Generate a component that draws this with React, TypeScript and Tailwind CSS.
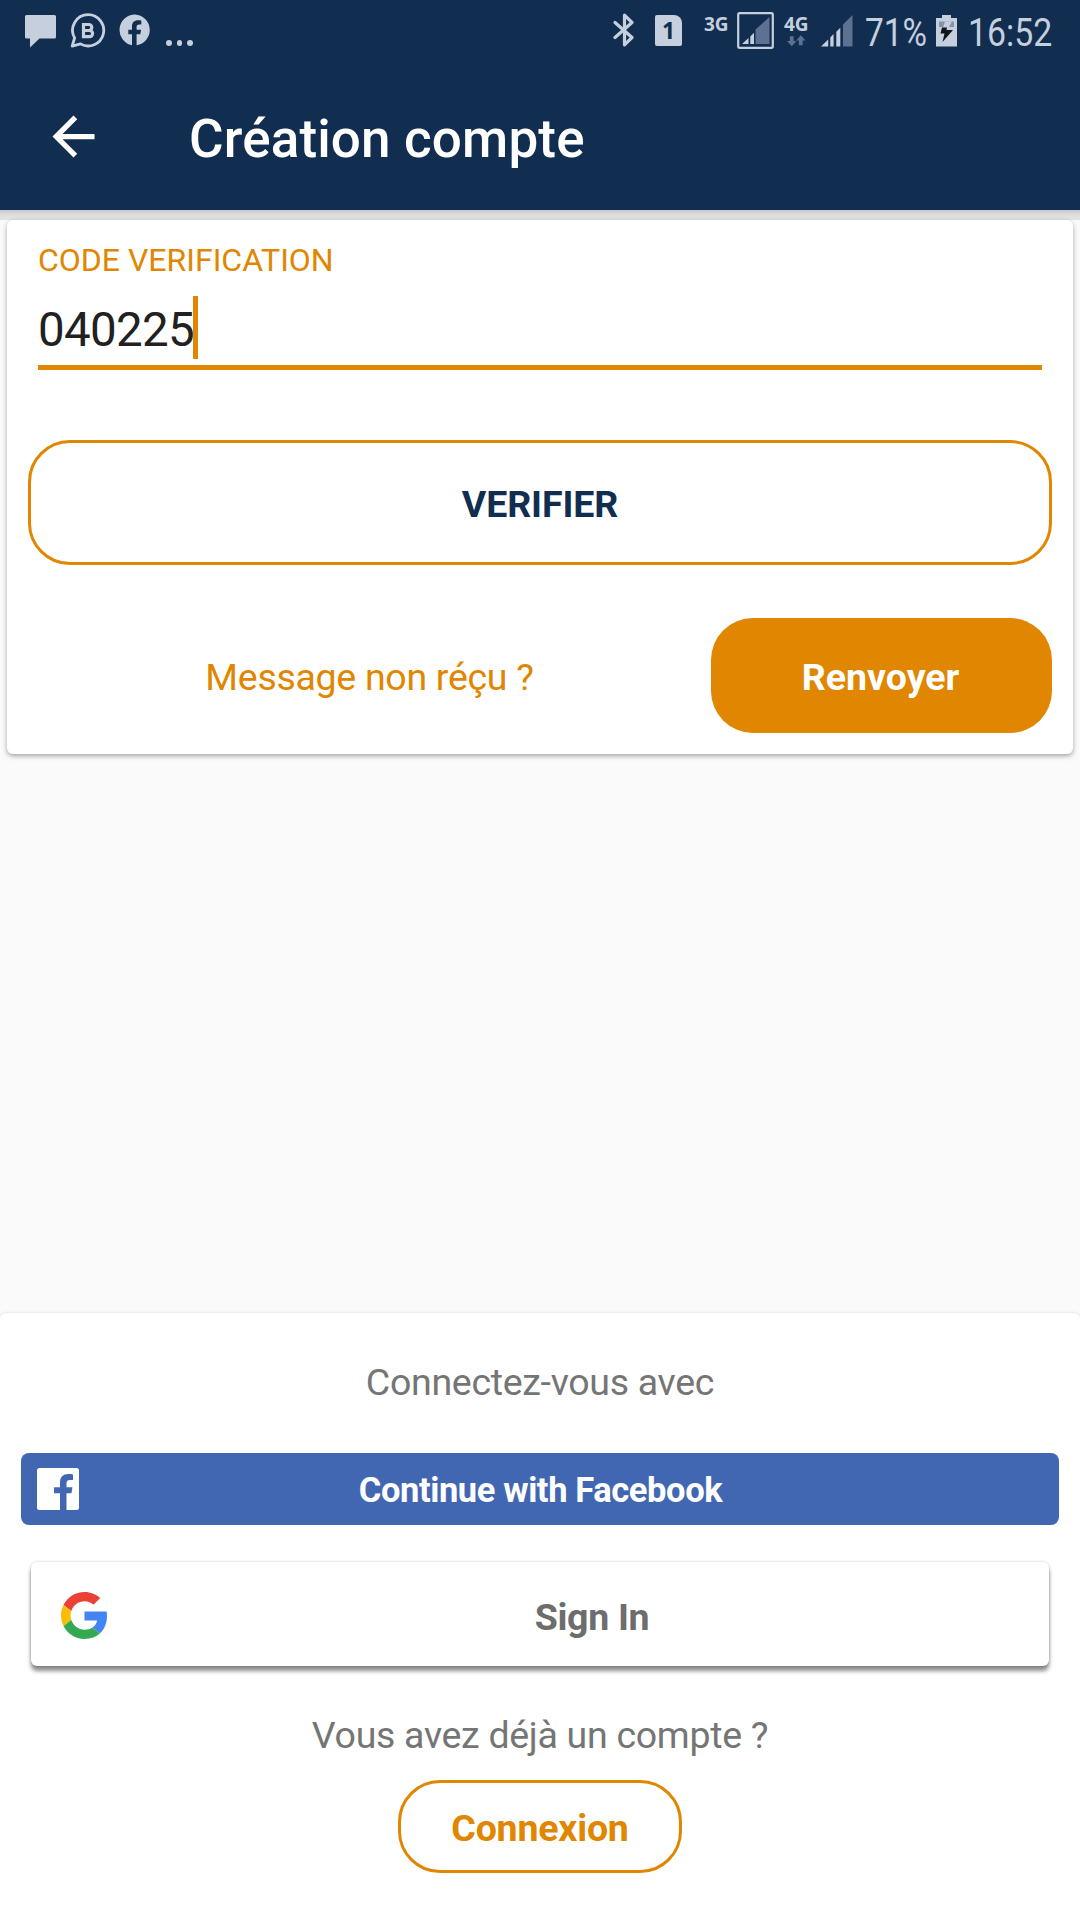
import React from "react";

type IconProps = {
  className?: string;
};

const ChatIcon: React.FC<IconProps> = ({ className }) => (
  <svg viewBox="0 0 31 33" className={className} fill="currentColor">
    <path d="M1.500 0h28A1.500 1.500 0 0 1 31 1.500V22a1.500 1.500 0 0 1-1.500 1.500H14.500L5 32.500V23.500H1.500A1.500 1.500 0 0 1 0 22V1.500A1.500 1.500 0 0 1 1.500 0Z" />
  </svg>
);

const BusinessChatIcon: React.FC<IconProps> = ({ className }) => (
  <svg viewBox="0 0 36 36" className={className} fill="none" stroke="currentColor">
    <path
      d="M18.200 1.700a15.600 15.600 0 0 0-13.600 23.300L2.200 33.200l8.300-2.300A15.600 15.600 0 1 0 18.200 1.700Z"
      strokeWidth="2.800"
      strokeLinejoin="round"
    />
    <path
      d="M13.500 11.500h5.300a3 3 0 0 1 0 6h-5.300ZM13.500 17.500h6a3.100 3.100 0 0 1 0 6.200h-6Z"
      strokeWidth="3.200"
    />
  </svg>
);

const FacebookRoundIcon: React.FC<IconProps> = ({ className }) => (
  <svg viewBox="0 0 32 32" className={className} fill="currentColor">
    <path d="M16 0.500a15.500 15.500 0 0 0-3 30.700V20.300H9.300v-4.500H13v-3.300c0-4.200 2.300-6.300 6-6.300 1.500 0 2.600.2 3.300.3v4h-2.200c-1.900 0-2.500 1-2.500 2.300v3h4.500l-.8 4.500h-3.700v11A15.500 15.500 0 0 0 16 .5Z" />
  </svg>
);

const BluetoothIcon: React.FC<IconProps> = ({ className }) => (
  <svg
    viewBox="0 0 22 34"
    className={className}
    fill="none"
    stroke="currentColor"
    strokeWidth="3.200"
    strokeLinejoin="round"
    strokeLinecap="round"
  >
    <path d="M2 9.500 19 24.500 11.500 31.800V2.200L19 9.500 2 24.500" />
  </svg>
);

const SignalBoxIcon: React.FC<IconProps> = ({ className }) => (
  <svg viewBox="0 0 37 37" className={className} fill="currentColor">
    <rect x="1.200" y="1.200" width="34.600" height="34.600" rx="1.500" fill="none" stroke="currentColor" strokeWidth="2.200" />
    <path d="M18.500 17.500 32.500 5v27h-14Z" className="fill-[#5d7190]" />
    <path d="M5 32l6.500-6v6ZM13.300 24.500l3.700-3.800V32h-3.700Z" />
  </svg>
);

const SignalIcon: React.FC<IconProps> = ({ className }) => (
  <svg viewBox="0 0 32 32" className={className} fill="currentColor">
    <path d="M22 9.500 31.500 0v31.500H22Z" className="fill-[#5d7190]" />
    <path d="M0 31.500l7.200-7v7ZM9.300 22.500l3.300-3.500v12.500H9.300ZM15.300 16.800l4-4v18.700h-4Z" />
  </svg>
);

const DataArrowsIcon: React.FC<IconProps> = ({ className }) => (
  <svg viewBox="0 0 20 12" className={className} fill="currentColor">
    <path d="M3 1h4v5h3L5 11.500 0 6h3ZM12.500 10.500h4v-5h3L14.500 0 9.800 5.500h2.700Z" />
  </svg>
);

const BatteryIcon: React.FC<IconProps> = ({ className }) => (
  <svg viewBox="0 0 21 32" className={className} fill="currentColor">
    <path d="M6 0h9v3h6v28.500H0V3h6Z" />
    <path d="M3 6.500h15v5.500H3Z" className="fill-[#8593aa]" />
    <path d="M9 6.500h7L12.500 12.500H7Z" />
    <path d="M6 12.500h5l-.5 2.500H17L6.500 27l2-8.500H4.500Z" className="fill-[#10151c]" />
  </svg>
);

const BackArrowIcon: React.FC<IconProps> = ({ className }) => (
  <svg viewBox="0 0 24 24" className={className} fill="currentColor">
    <path d="M20 11H7.830l5.590-5.590L12 4l-8 8 8 8 1.410-1.410L7.830 13H20v-2z" />
  </svg>
);

const FacebookSquareIcon: React.FC<IconProps> = ({ className }) => (
  <svg viewBox="0 0 42 42" className={className} fill="currentColor">
    <path d="M2.500 0h37A2.500 2.500 0 0 1 42 2.500v37a2.500 2.500 0 0 1-2.500 2.500H29.500V25.300h5l.9-6.100h-5.900v-3.700c0-2.200.8-3.500 3.200-3.500H36V6.400C35.400 6.300 33.400 6 31.200 6c-4.900 0-8.200 3-8.200 8.400v4.800h-6v6.100h6V42H2.500A2.500 2.500 0 0 1 0 39.500v-37A2.500 2.500 0 0 1 2.500 0Z" />
  </svg>
);

const GoogleIcon: React.FC<IconProps> = ({ className }) => (
  <svg viewBox="0 0 48 48" className={className}>
    <path fill="#EA4335" d="M24 9.500c3.540 0 6.710 1.220 9.210 3.600l6.850-6.850C35.900 2.380 30.470 0 24 0 14.620 0 6.510 5.380 2.560 13.220l7.980 6.190C12.430 13.720 17.740 9.500 24 9.500z" />
    <path fill="#4285F4" d="M46.980 24.550c0-1.570-.15-3.090-.38-4.550H24v9.020h12.940c-.58 2.960-2.260 5.480-4.780 7.180l7.730 6c4.510-4.180 7.090-10.360 7.090-17.650z" />
    <path fill="#FBBC05" d="M10.530 28.590c-.48-1.450-.76-2.990-.76-4.590s.27-3.140.76-4.590l-7.980-6.190C.92 16.460 0 20.120 0 24c0 3.880.92 7.540 2.560 10.780l7.970-6.190z" />
    <path fill="#34A853" d="M24 48c6.480 0 11.930-2.130 15.890-5.810l-7.730-6c-2.150 1.450-4.920 2.300-8.160 2.300-6.260 0-11.570-4.220-13.470-9.910l-7.980 6.190C6.510 42.620 14.620 48 24 48z" />
  </svg>
);

const StatusBar: React.FC = () => (
  <div className="flex h-[63px] items-start pr-[10px] text-[#c6cfdd]">
    <ChatIcon className="mt-[15px] ml-[25px] h-[33px] w-[31px] shrink-0" />
    <BusinessChatIcon className="mt-[13px] ml-[14px] size-[36px] shrink-0" />
    <FacebookRoundIcon className="mt-[14px] ml-[13px] size-[32px] shrink-0" />
    <div className="mt-[40px] ml-[15px] flex gap-[5px]">
      <span className="size-[5.500px] rounded-full bg-current" />
      <span className="size-[5.500px] rounded-full bg-current" />
      <span className="size-[5.500px] rounded-full bg-current" />
    </div>

    <BluetoothIcon className="mt-[13px] ml-auto h-[34px] w-[22px] shrink-0" />
    <div className="mt-[15px] ml-[20px] flex h-[31px] w-[27px] items-center justify-center rounded-[2px] rounded-tr-[8px] bg-current">
      <span className="font-['Open_Sans'] text-[23px] leading-none font-bold text-[#112e51]">1</span>
    </div>
    <span className="mt-[14px] ml-[22px] w-[24px] font-['Open_Sans'] text-[19px] leading-[20px] font-bold">3G</span>
    <SignalBoxIcon className="mt-[12px] ml-[9px] size-[37px] shrink-0" />
    <div className="ml-[10px] w-[25px] pt-[14px]">
      <p className="font-['Open_Sans'] text-[19px] leading-[20px] font-bold">4G</p>
      <DataArrowsIcon className="mt-px ml-[3px] h-[12px] w-[19px] text-[#5d7190]" />
    </div>
    <SignalIcon className="mt-[15px] ml-[12px] size-[32px] shrink-0" />
    <span className="mt-[11px] ml-[12px] w-[64px] origin-left scale-x-[0.880] text-[38px] leading-[44px]">71%</span>
    <BatteryIcon className="mt-[15px] ml-[7px] h-[32px] w-[21px] shrink-0" />
    <span className="mt-[11px] ml-[11px] w-[102px] origin-left scale-x-[0.890] text-[38px] leading-[44px]">16:52</span>
  </div>
);

const Header: React.FC = () => (
  <header className="relative z-10 h-[210px] bg-[#112e51]">
    <StatusBar />
    <div className="flex h-[147px] items-center pl-[42px] text-white">
      <button>
        <BackArrowIcon className="size-[63px]" />
      </button>
      <h1 className="ml-[84px] pt-[6px] text-[53px] leading-none font-medium tracking-[0.150px]">Création compte</h1>
    </div>
    <div className="h-[10px] bg-linear-to-b from-[#c9c9cc] via-[#dededd] to-[#e3e3e3]" />
  </header>
);

const VerificationCard: React.FC = () => (
  <section className="relative z-20 mx-[7px] mt-[10px] flex h-[534px] flex-col rounded-[6px] bg-white px-[21px] shadow-[0_2px_5px_rgba(0,0,0,0.35)]">
    <div className="mx-[10px] flex h-[150px] flex-col border-b-[5px] border-[#e08600]">
      <label className="mt-[24px] text-[32px] leading-[32px] text-[#e08600]">CODE VERIFICATION</label>
      <div className="mt-[20px] flex h-[63px] items-center">
        <span className="pt-[6px] text-[47.500px] leading-[57px] tracking-[-0.700px] text-[#212121]">040225</span>
        <span className="-ml-px h-[63px] w-[5px] bg-[#e08600]" />
      </div>
    </div>
    <button className="mt-[70px] h-[125px] rounded-[42px] border-[3px] border-[#e08600] pt-[5px] text-[37.500px] leading-none tracking-[-0.100px] font-bold text-[#112e51]">
      VERIFIER
    </button>
    <div className="mt-[53px] flex h-[115px] items-center">
      <p className="flex-1 pt-[4px] text-center text-[37.500px] tracking-[-0.300px] text-[#e08600]">Message non réçu ?</p>
      <button className="h-full w-[341px] rounded-[42px] bg-[#e08600] pt-[4px] pr-[2px] text-[37.500px] font-bold text-white">Renvoyer</button>
    </div>
  </section>
);

const SocialLogin: React.FC = () => (
  <section className="mt-auto flex h-[607px] flex-col items-center rounded-t-[6px] bg-white shadow-[0_0_3px_rgba(0,0,0,0.15)]">
    <p className="mt-[47px] text-[37.500px] leading-[44px] tracking-[-0.300px] text-[#757575]">Connectez-vous avec</p>
    <button className="mt-[49px] flex h-[72px] w-[1038px] items-center rounded-[8px] bg-[#4267b2] pl-[16px] text-white">
      <FacebookSquareIcon className="size-[42px]" />
      <span className="flex-1 pt-[4px] pr-[57px] text-center text-[34.500px] tracking-[-0.400px] font-bold">Continue with Facebook</span>
    </button>
    <button className="mt-[37px] flex h-[104px] w-[1018px] items-center rounded-[6px] bg-white pl-[30px] shadow-[0_5px_4px_rgba(0,0,0,0.45),0_0_3px_rgba(0,0,0,0.2)]">
      <GoogleIcon className="mt-[2px] size-[47px]" />
      <span className="flex-1 pt-[7px] pl-[27px] text-center text-[37.500px] tracking-[-0.300px] font-bold text-[#6d6d6d]">Sign In</span>
    </button>
    <p className="mt-[47px] text-[37.500px] leading-[44px] tracking-[-0.300px] text-[#757575]">Vous avez déjà un compte ?</p>
    <button className="mt-[23px] h-[93px] w-[284px] rounded-[42px] border-[3px] border-[#e08600] pt-[4px] text-[37.500px] tracking-[-0.200px] font-bold text-[#e08600]">
      Connexion
    </button>
  </section>
);

export default function App() {
  return (
    <main className="flex h-[1920px] w-[1080px] flex-col overflow-hidden bg-[#fafafa] font-[Roboto,sans-serif]">
      <Header />
      <VerificationCard />
      <SocialLogin />
    </main>
  );
}
